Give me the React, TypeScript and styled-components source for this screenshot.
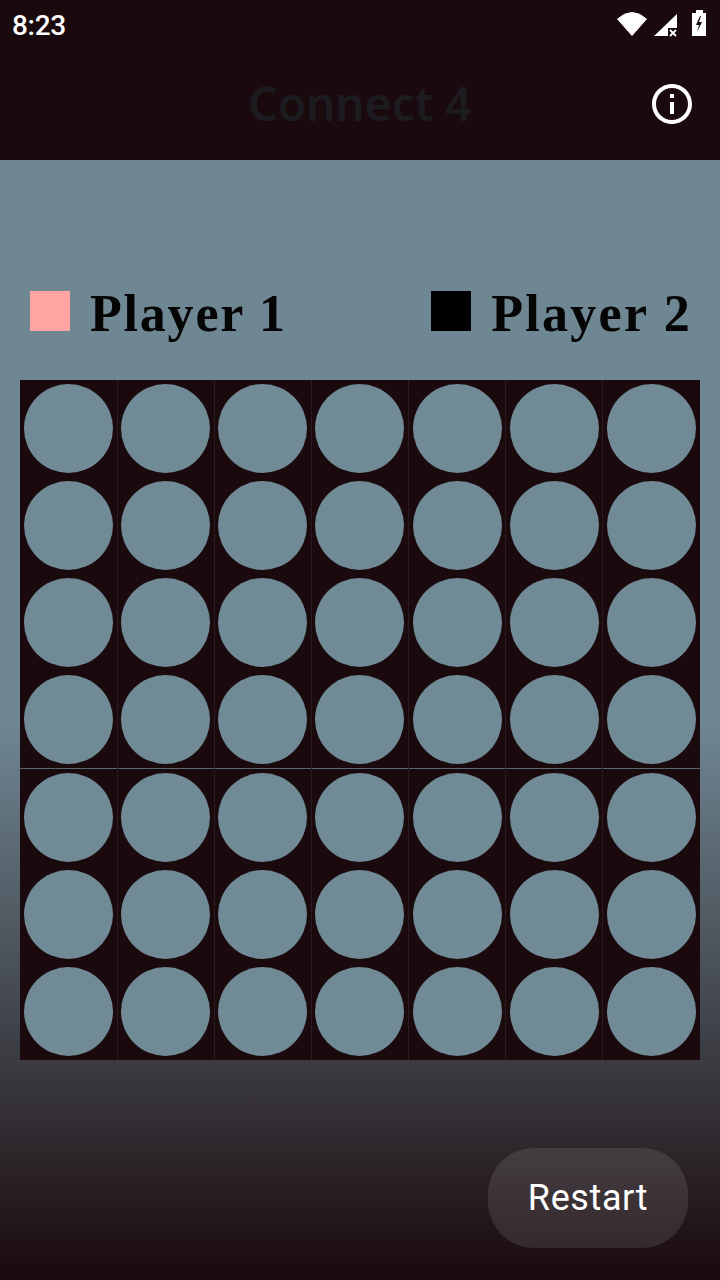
import React from 'react'
import styled, { createGlobalStyle } from 'styled-components'

const GlobalStyle = createGlobalStyle`
html, body {
  margin: 0;
  padding: 0;
  background: #1a0a0d;
}
* {
  box-sizing: border-box;
}
`
const Screen = styled.div`
width: 720px;
height: 1280px;
display: flex;
flex-direction: column;
overflow: hidden;
`
const Header = styled.div`
background-color: #1a0a0d;
height: 160px;
display: flex;
flex-direction: column;
`
const StatusBar = styled.div`
height: 48px;
padding: 0 13px 0 12px;
display: flex;
align-items: center;
justify-content: space-between;
`
const Clock = styled.span`
font-family: Roboto, sans-serif;
font-weight: 500;
font-size: 28px;
letter-spacing: -0.3px;
color: #ffffff;
position: relative;
top: 1px;
`
const StatusIcons = styled.svg`
display: block;
width: 101px;
height: 48px;
`
const AppBar = styled.div`
height: 112px;
padding: 0 24px;
display: grid;
grid-template-columns: 48px 1fr 48px;
align-items: center;
`
const Title = styled.h1`
grid-column: 2;
margin: 0 0 2px;
text-align: center;
font-family: "Noto Sans", sans-serif;
font-weight: 600;
font-size: 46px;
color: #1b1b20;
`
const InfoIcon = styled.svg`
grid-column: 3;
display: block;
width: 48px;
height: 48px;
fill: #ffffff;
`
const Body = styled.div`
flex: 1;
display: flex;
flex-direction: column;
padding: 0 20px;
background: linear-gradient(180deg, #6f8793 0%, #6f8793 50%, #1a0a0d 100%);
`
const Legend = styled.div`
margin-top: 131px;
height: 89px;
padding: 0 8px 0 10px;
display: flex;
justify-content: space-between;
`
const Player = styled.div`
display: flex;
gap: 20px;
`
const Swatch = styled.div<{ propsColor: string }>`
width: 40px;
height: 40px;
background-color: ${props => props.propsColor};
`
const PlayerName = styled.span<{ propsSpacing: string }>`
font-family: "Liberation Serif", serif;
font-weight: 700;
font-size: 52px;
line-height: 46px;
letter-spacing: ${props => props.propsSpacing};
color: #050505;
`
const Board = styled.div`
width: 680px;
height: 680px;
display: grid;
grid-template-columns: repeat(6, 97.08px) minmax(0, 1fr);
grid-template-rows: repeat(7, minmax(0, 1fr));
background-color: #1a0a0d;
`
const Cell = styled.div<{ propsDivider: boolean, propsFirst: boolean, propsInset: string }>`
padding: 4px 0 0 ${props => props.propsInset};
box-shadow: ${props => [
    props.propsFirst ? '' : 'inset 1px 0 0 #2a1c20',
    props.propsDivider ? 'inset 0 -1px 0 #5b6873' : ''
].filter(Boolean).join(', ') || 'none'};
`
const Hole = styled.div`
width: 89px;
height: 89px;
border-radius: 50%;
background-color: #708a96;
`
const Footer = styled.div`
margin-top: 88px;
display: flex;
justify-content: flex-end;
padding-right: 12px;
`
const RestartButton = styled.button`
width: 200px;
height: 100px;
border: none;
border-radius: 46px;
background-color: rgba(255, 255, 255, 0.1);
font-family: Roboto, sans-serif;
font-weight: 400;
font-size: 36px;
letter-spacing: 0.6px;
color: #ffffff;
`

const cells = Array.from({ length: 49 }, (_, i) => i)

const App = () => {
    return (
        <Screen>
            <GlobalStyle />
            <Header>
                <StatusBar>
                    <Clock>8:23</Clock>
                    <StatusIcons viewBox="0 0 101 48">
                        <path d="M11.5 19Q26 6 40.5 19L26 35.5Z" fill="#fff" stroke="#fff" strokeWidth="1" strokeLinejoin="round" />
                        <path d="M48 36L71 14V28H62V36Z" fill="#fff" />
                        <path d="M64 30L70 36M70 30L64 36" stroke="#fff" strokeWidth="1.8" />
                        <path d="M90 10H97V13H100V36H86V13H90Z" fill="#fff" />
                        <path d="M94 16L90 25H93L91 32L96 22H93L95 16Z" fill="#1a0a0d" />
                    </StatusIcons>
                </StatusBar>
                <AppBar>
                    <Title>Connect 4</Title>
                    <InfoIcon viewBox="0 0 24 24">
                        <path d="M11 7h2v2h-2zm0 4h2v6h-2zm1-9C6.48 2 2 6.48 2 12s4.48 10 10 10 10-4.48 10-10S17.52 2 12 2zm0 18c-4.41 0-8-3.59-8-8s3.59-8 8-8 8 3.59 8 8-3.59 8-8 8z" />
                    </InfoIcon>
                </AppBar>
            </Header>
            <Body>
                <Legend>
                    <Player>
                        <Swatch propsColor="#ffa4a0" />
                        <PlayerName propsSpacing="1.8px">Player 1</PlayerName>
                    </Player>
                    <Player>
                        <Swatch propsColor="#000000" />
                        <PlayerName propsSpacing="2.3px">Player 2</PlayerName>
                    </Player>
                </Legend>
                <Board>
                    {cells.map(i => (
                        <Cell
                            key={i}
                            propsDivider={i >= 21 && i < 28}
                            propsFirst={i % 7 === 0}
                            propsInset={i % 7 >= 4 ? '5px' : '4px'}
                        >
                            <Hole />
                        </Cell>
                    ))}
                </Board>
                <Footer>
                    <RestartButton>Restart</RestartButton>
                </Footer>
            </Body>
        </Screen>
    )
}

export default App
